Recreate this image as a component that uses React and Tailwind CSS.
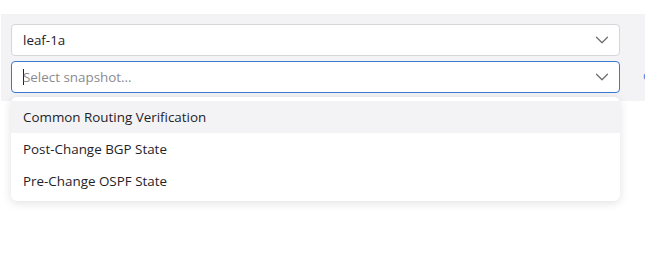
import { ChevronDown } from 'lucide-react';

const snapshots = ['Common Routing Verification', 'Post-Change BGP State', 'Pre-Change OSPF State'];

export default function App() {
  return (
    <div className="relative h-[271px] w-[645px] overflow-hidden bg-white text-[13.4px] text-[#1f2328]" style={{ fontFamily: '"Open Sans", "Noto Sans", sans-serif' }}>
      <div className="mt-[14px] ml-[1px] flex items-start bg-[#f3f3f5] pt-[10px] pb-[8px] pl-[10px]">
        <div className="flex w-[609px] shrink-0 flex-col gap-[5px]">
          <div className="flex h-[32px] items-center justify-between rounded-[4px] border border-[#d6d6d9] bg-white pl-[11px] pr-[6px]">
            <span>leaf-1a</span>
            <ChevronDown size={22} strokeWidth={1.3} className="text-[#6b6b70]" />
          </div>
          <div className="flex h-[32px] items-center justify-between rounded-[4px] border border-[#3a78d4] bg-white pl-[11px] pr-[6px]">
            <span className="flex items-center text-[#8a8a90]">
              <span className="mr-[-1px] inline-block h-[16px] w-[1px] bg-[#1f2328]" />
              Select snapshot...
            </span>
            <ChevronDown size={22} strokeWidth={1.3} className="text-[#6b6b70]" />
          </div>
        </div>
        <span className="ml-[23px] mt-[43px] text-[13px] leading-[16px] text-[#3a78d4]">c</span>
      </div>

      <div className="absolute left-[11px] top-[97px] w-[609px] rounded-[6px] bg-white py-[4px] shadow-[0_2px_10px_rgba(0,0,0,0.12)]">
        {snapshots.map((s, i) => (
          <div key={s} className={`flex h-[32px] items-center px-[12px] ${i === 0 ? 'bg-[#f3f3f5]' : ''}`}>
            {s}
          </div>
        ))}
      </div>
    </div>
  );
}
